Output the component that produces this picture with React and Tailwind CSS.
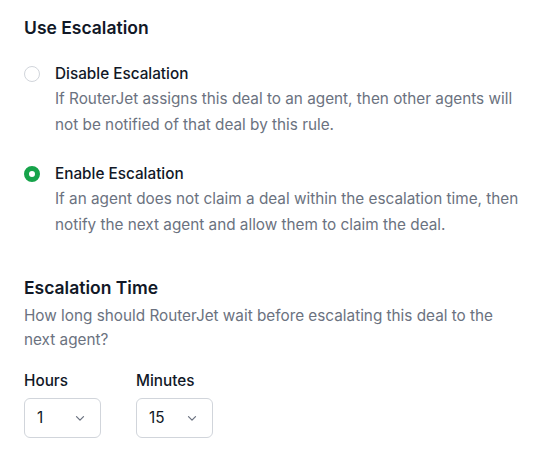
import { useState } from "react";

const font = { fontFamily: "Inter, 'Noto Sans', sans-serif" };

function Radio({ checked }) {
  return checked ? (
    <span className="mt-[3px] block h-4 w-4 shrink-0 rounded-full border-[5px] border-[#16a34a] bg-white" />
  ) : (
    <span className="mt-[3px] block h-4 w-4 shrink-0 rounded-full border border-[#d1d5db] bg-white" />
  );
}

function Chevron() {
  return (
    <svg width="14" height="14" viewBox="0 0 20 20" fill="none" stroke="#6b7280" strokeWidth="1.8" strokeLinecap="round" strokeLinejoin="round">
      <path d="M5 8l5 5 5-5" />
    </svg>
  );
}

function Select({ label, value }) {
  return (
    <div className="flex flex-col">
      <span className="text-[15.3px] font-medium leading-5 text-[#111827]">{label}</span>
      <div className="mt-[7px] flex h-10 w-[77px] items-center justify-between rounded-md border border-[#d1d5db] bg-white pl-3 pr-[13px]">
        <span className="text-[15.3px] text-[#111827]">{value}</span>
        <Chevron />
      </div>
    </div>
  );
}

const options = [
  {
    id: "disable",
    title: "Disable Escalation",
    text: "If RouterJet assigns this deal to an agent, then other agents will not be notified of that deal by this rule.",
  },
  {
    id: "enable",
    title: "Enable Escalation",
    text: "If an agent does not claim a deal within the escalation time, then notify the next agent and allow them to claim the deal.",
  },
];

export default function App() {
  const [choice, setChoice] = useState("enable");

  return (
    <div className="min-h-screen bg-white px-6 pt-[16px]" style={font}>
      <h2 className="text-[17.5px] font-semibold leading-6 text-[#111827]">Use Escalation</h2>

      <div className="mt-[23px] flex flex-col gap-[25px]">
        {options.map((o) => (
          <label key={o.id} className="flex cursor-pointer gap-[15px]" onClick={() => setChoice(o.id)}>
            <Radio checked={choice === o.id} />
            <div className="flex-1">
              <div className="text-[15.3px] font-medium leading-[22px] text-[#111827]">{o.title}</div>
              <p className="mt-[1px] pr-1 text-[15.3px] leading-[26px] text-[#6b7280]">{o.text}</p>
            </div>
          </label>
        ))}
      </div>

      <h2 className="mt-[38px] text-[17.5px] font-semibold leading-6 text-[#111827]">Escalation Time</h2>
      <p className="mt-[4px] pr-6 text-[15.3px] leading-6 text-[#6b7280]">
        How long should RouterJet wait before escalating this deal to the next agent?
      </p>

      <div className="mt-[19px] flex gap-[35px]">
        <Select label="Hours" value="1" />
        <Select label="Minutes" value="15" />
      </div>
    </div>
  );
}
